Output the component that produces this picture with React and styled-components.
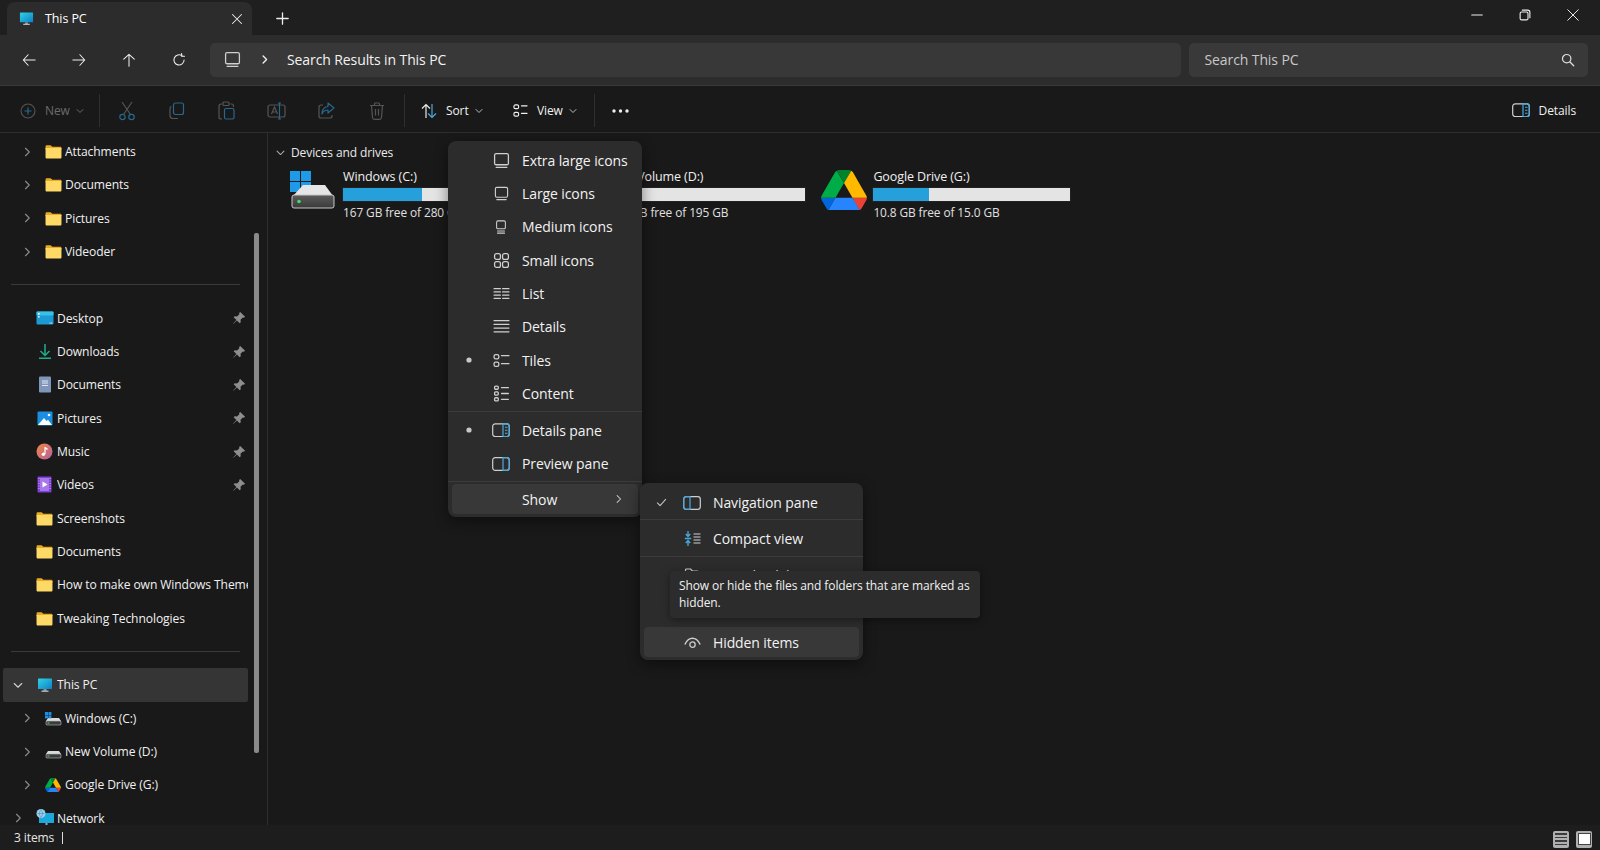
import React from "react";
import styled, { createGlobalStyle } from "styled-components";

const Global = createGlobalStyle`
  html, body { margin: 0; padding: 0; background: #191919; }
  body { font-family: "Open Sans", "Noto Sans", "Liberation Sans", sans-serif; color: #f0f0f0; }
  * { box-sizing: border-box; }
`;

const Page = styled.div`
  position: relative; width: 1600px; height: 850px; overflow: hidden;
  display: flex; flex-direction: column; background: #191919; font-size: 13px; letter-spacing: -0.1px;
`;
const TitleBar = styled.div`
  height: 35px; flex: none; background: #1f1f1f; display: flex; align-items: flex-end; padding-left: 7px;
`;
const Tab = styled.div`
  width: 245px; height: 33px; background: #2c2c2c; border-radius: 8px 8px 0 0; display: flex; align-items: center;
  padding: 0 9px 0 12px; gap: 11px; font-size: 12.5px; color: #fff;
`;
const TabTitle = styled.span` flex: 1; `;
const PlusBtn = styled.div` margin-left: 24px; width: 16px; height: 33px; display: flex; align-items: center; color: #eee; `;
const WinControls = styled.div` margin-left: auto; height: 35px; display: flex; padding-right: 3px; align-self: flex-start; `;
const WinBtn = styled.div` width: 48px; height: 30px; display: flex; align-items: center; justify-content: center; color: #eee; `;

const NavBar = styled.div`
  height: 51px; flex: none; background: #2c2c2c; border-bottom: 1px solid #3a3a3a; display: flex; align-items: center;
  padding: 0 12px 1px 3.5px;
`;
const NavBtn = styled.div` width: 50px; height: 34px; display: flex; align-items: center; justify-content: center; color: #eee; `;
const Address = styled.div`
  margin-left: 6.5px; width: 971px; height: 34px; border-radius: 5px; background: #383838; display: flex; align-items: center;
  padding-left: 14px; font-size: 14px; color: #f3f3f3;
`;
const Crumb = styled.div` width: 46px; display: flex; justify-content: center; `;
const SearchBox = styled.div`
  margin-left: 8px; width: 399px; height: 34px; border-radius: 5px; background: #393939; display: flex; align-items: center;
  justify-content: space-between; padding: 0 13px 0 15.5px; font-size: 14px; color: #c8c8c8;
`;

const Toolbar = styled.div`
  height: 47px; flex: none; background: #191919; border-bottom: 1px solid #2e2e2e; display: flex; align-items: center; padding-left: 14px; padding-top: 3px;
`;
const TBtn = styled.div`
  width: ${(p) => p.$w}px; height: 36px; display: flex; align-items: center; flex: none;
  justify-content: ${(p) => (p.$center ? "center" : "flex-start")};
  padding-left: ${(p) => p.$pl || 0}px; gap: 9.5px; color: ${(p) => (p.$dim ? "#6b6b6b" : "#f0f0f0")}; font-size: 12px;
`;
const TSep = styled.div` width: 1px; height: 33px; background: #2f2f2f; flex: none; margin: 0 ${(p) => p.$mr}px 0 ${(p) => p.$ml}px; `;
const TCaret = styled.span` display: flex; margin-left: -3px; `;
const DetailsBtn = styled.div` margin-left: auto; padding-right: 24px; display: flex; align-items: center; gap: 9px; font-size: 12px; color: #f0f0f0; `;

const Body = styled.div` flex: 1; min-height: 0; display: flex; `;
const Sidebar = styled.div`
  position: relative; width: 268px; flex: none; border-right: 1px solid #2e2e2e; padding: 2px 0 0 3px; overflow: hidden; font-size: 12.1px;
`;
const Scroll = styled.div` position: absolute; left: 254px; top: 100px; width: 5px; height: 520px; background: #8a8a8a; border-radius: 2px; `;
const Row = styled.div`
  width: 245px; height: 33.33px; display: flex; align-items: center; flex: none; border-radius: 2px;
  padding-left: ${(p) => (p.$level === 2 ? 15.5 : 7)}px; white-space: nowrap;
  background: ${(p) => (p.$active ? "#353535" : "transparent")};
`;
const Chev = styled.span` width: 16px; height: 16px; display: flex; align-items: center; justify-content: center; flex: none; margin-right: 9.5px; color: #8c8c8c; `;
const RowIcon = styled.span` width: 18px; height: 17px; display: flex; align-items: center; justify-content: center; flex: none; margin-right: ${(p) => (p.$level === 2 ? 3 : 3.5)}px; `;
const RowText = styled.span` flex: 1; overflow: hidden; min-width: 0; color: #f0f0f0; `;
const Pin = styled.span` width: 14px; display: flex; flex: none; margin-right: 2px; margin-left: 4px; `;
const SideSep = styled.div`
  width: 229px; height: 33.33px; margin-left: 8px; display: flex; align-items: center;
  &::after { content: ""; width: 100%; height: 1px; background: #3a3a3a; }
`;

const Main = styled.div` flex: 1; padding: 9px 0 0 7px; font-size: 12.5px; `;
const GroupHead = styled.div` display: flex; align-items: center; gap: 5px; height: 20px; color: #eaeaea; font-size: 12px; `;
const Tiles = styled.div` display: flex; padding-left: 15px; margin-top: 6px; `;
const Tile = styled.div` width: 265.2px; display: flex; flex: none; gap: 5px; `;
const TileIcon = styled.div` width: 47px; height: 44px; display: flex; align-items: center; flex: none; justify-content: center; `;
const TileInfo = styled.div` width: 199px; display: flex; flex-direction: column; color: #f0f0f0; `;
const TileName = styled.div` line-height: 18.5px; padding-left: 1px; `;
const TileSub = styled.div` color: #e0e0e0; line-height: 20px; font-size: 11.9px; padding-left: 1px; `;
const Bar = styled.div` height: 15.5px; background: #e4e4e4; border: 1px solid #222; `;
const BarFill = styled.div` height: 100%; background: #26a0da; `;

const Status = styled.div`
  height: 25px; flex: none; background: #1d1d1d; display: flex; align-items: center; padding: 0 8px 0 14px; font-size: 12px; color: #e6e6e6;
`;
const StatusRight = styled.div` margin-left: auto; display: flex; gap: 7px; margin-top: 3px; `;
const ViewBox = styled.div`
  width: 16px; height: 17px; background: #b0b0b0; border-radius: 2px; display: flex; flex-direction: column; justify-content: center;
  align-items: center; gap: 2px;
`;
const ViewLine = styled.span` width: 12px; height: 1.5px; background: #3c3c3c; `;
const ViewSquare = styled.span` width: 11px; height: 10px; background: #fff; box-shadow: 0 0 0 1px #444; `;
const Cursor = styled.span` display: inline-block; width: 1px; height: 12px; background: #ddd; margin-left: 8px; `;

const Menu = styled.div`
  position: absolute; left: ${(p) => p.$x}px; top: ${(p) => p.$y}px; width: ${(p) => p.$w}px; background: #2c2c2c;
  border-radius: 8px; box-shadow: 0 4px 14px rgba(0,0,0,.45); font-size: 14px; color: #f2f2f2;
  padding: ${(p) => p.$pt || 0}px 0 3px;
`;
const MenuRow = styled.div`
  height: ${(p) => p.$h || 33.33}px; display: flex; align-items: center; position: relative; border-radius: 4px;
  margin: 0 ${(p) => (p.$hover ? 4 : 0)}px; background: ${(p) => (p.$hover ? "#383838" : "transparent")};
  padding-left: ${(p) => 11 - (p.$hover ? 4 : 0)}px;
`;
const MenuMark = styled.span` width: 20px; display: flex; justify-content: center; flex: none; `;
const MenuIcon = styled.span` width: 24px; display: flex; justify-content: center; flex: none; margin-left: ${(p) => p.$ml}px; margin-right: 9px; `;
const MenuSep = styled.div` height: 1px; background: #3c3c3c; margin: ${(p) => p.$m || 0}; `;
const MenuArrow = styled.span` position: absolute; right: 14px; display: flex; top: 50%; transform: translateY(-50%); `;
const Tooltip = styled.div`
  position: absolute; left: 670px; top: 571px; width: 310px; height: 47px; background: #2c2c2c; border-radius: 4px;
  box-shadow: 0 2px 8px rgba(0,0,0,.4); padding: 6px 9px; font-size: 12px; line-height: 17px; color: #f0f0f0;
`;

const S = { fill: "none", stroke: "currentColor", strokeWidth: 1.2, strokeLinecap: "round", strokeLinejoin: "round" };
const Ic = ({ s = 16, vb = 16, children, c }) => (
  <svg width={s} height={s} viewBox={`0 0 ${vb} ${vb}`} {...S} color={c}>{children}</svg>
);
const ChevR = ({ c = "#8c8c8c", s = 12, w = 1.5 }) => <Ic s={s} c={c}><path d="M6 3l5 5-5 5" strokeWidth={w} /></Ic>;
const ChevD = ({ c = "#8c8c8c", s = 12 }) => <Ic s={s} c={c}><path d="M3 6l5 5 5-5" strokeWidth="1.5" /></Ic>;
const Caret = ({ c = "#bbb" }) => <TCaret><Ic s={8} c={c}><path d="M2 5l6 6 6-6" strokeWidth="2" /></Ic></TCaret>;

const Monitor = ({ s = 16, id = "mon" }) => (
  <svg width={s} height={s} viewBox="0 0 16 16">
    <defs><linearGradient id={id} x1="0" y1="0" x2="1" y2="1"><stop offset="0" stopColor="#2fd3e8" /><stop offset="1" stopColor="#0f7fc4" /></linearGradient></defs>
    <rect x="6.5" y="12" width="3" height="2" fill="#8a8f94" /><rect x="4.5" y="13.6" width="7" height="1.2" fill="#c4c8cc" />
    <rect x="1" y="1.5" width="14" height="10.5" rx=".6" fill={`url(#${id})`} />
  </svg>
);
const Folder = () => (
  <svg width="17" height="15" viewBox="0 0 16 14">
    <path d="M.5 2.2C.5 1.5 1 1 1.7 1h3.600l1.600 1.600h7.400c.7 0 1.200.5 1.200 1.200v1H.5z" fill="#e9a924" />
    <path d="M.5 3.800h15v8.500c0 .7-.5 1.200-1.200 1.200H1.700c-.7 0-1.200-.5-1.200-1.200z" fill="#ffd966" />
  </svg>
);
const DesktopI = () => (
  <svg width="18" height="14" viewBox="0 0 18 14"><rect x=".5" y=".5" width="17" height="13" rx="1" fill="#1c9ad6" /><rect x=".5" y=".5" width="17" height="4" rx="1" fill="#39c0e6" /><rect x="2" y="2" width="1.6" height="1.6" fill="#fff" /><rect x="2" y="5" width="1.6" height="1.6" fill="#d8f0fa" /><rect x="13.5" y="11.6" width="1" height="1" fill="#fff" /><rect x="15.2" y="11.6" width="1" height="1" fill="#fff" /></svg>
);
const DownloadI = () => (
  <svg width="14" height="17" viewBox="0 0 14 17"><path d="M7 1v11M2.500 8L7 12.500 11.500 8" fill="none" stroke="#1fae8d" strokeWidth="1.5" /><rect x="1" y="14.500" width="12" height="1.500" fill="#1fae8d" /></svg>
);
const DocI = () => (
  <svg width="14" height="17" viewBox="0 0 14 17"><rect x="1" y=".5" width="12" height="16" rx="1" fill="#7f96b8" /><path d="M4 5h6M4 7h6M4 9.500h6" stroke="#dfe6f0" strokeWidth="1" /></svg>
);
const PicI = () => (
  <svg width="16" height="15" viewBox="0 0 16 15"><rect x=".5" y=".5" width="15" height="14" rx="1" fill="#1a8fe0" /><path d="M1 14l6-7 2.500 3 1.500-1.200L15 14z" fill="#fff" /><circle cx="12" cy="4" r="1.300" fill="#fff" /></svg>
);
const MusicI = () => (
  <svg width="17" height="17" viewBox="0 0 17 17"><defs><linearGradient id="mu" x1="0" y1="0" x2="1" y2="1"><stop offset="0" stopColor="#f0893f" /><stop offset="1" stopColor="#b55ea0" /></linearGradient></defs><circle cx="8.500" cy="8.500" r="8" fill="url(#mu)" /><path d="M9 4v7" stroke="#fff" strokeWidth="1.200" /><circle cx="7.400" cy="11.300" r="1.700" fill="#fff" /><path d="M9 4l2.500 1.300V7L9 6z" fill="#fff" /></svg>
);
const VideoI = () => (
  <svg width="15" height="17" viewBox="0 0 15 17"><rect x=".5" y=".5" width="14" height="16" rx="1" fill="#7f3fd6" /><rect x="3" y="2" width="9" height="13" fill="#a678ea" /><path d="M5.500 5.500l5 3-5 3z" fill="#fff" /><path d="M1.500 2.500h.8M1.500 5h.8M1.500 7.500h.8M1.500 10h.8M1.500 12.500h.8M12.700 2.500h.8M12.700 5h.8M12.700 7.500h.8M12.700 10h.8M12.700 12.500h.8" stroke="#e6d8fb" strokeWidth="1" /></svg>
);
const DriveSm = ({ win }) => (
  <svg width="17" height="17" viewBox="0 0 17 17">
    <path d="M3 8h11l2 3v3a1 1 0 01-1 1H2a1 1 0 01-1-1v-3z" fill="#d9d9d9" /><rect x="1" y="11" width="15" height="4" rx="1" fill="#3b3b3b" stroke="#bbb" strokeWidth=".6" /><rect x="2.500" y="12.500" width="2" height="1" fill="#5ad35a" />
    {win && <g fill="#1d8fe0"><rect x="0" y="2" width="3" height="3" /><rect x="3.400" y="2" width="3" height="3" /><rect x="0" y="5.400" width="3" height="3" /><rect x="3.400" y="5.400" width="3" height="3" /></g>}
  </svg>
);
const GDrive = ({ s = 16 }) => (
  <svg width={s} height={s * 0.89} viewBox="0 0 87.300 78">
    <path d="M6.600 66.850l3.850 6.650c.8 1.400 1.950 2.500 3.300 3.300L27.500 53H0c0 1.550.4 3.100 1.200 4.500z" fill="#0066da" />
    <path d="M43.650 25L29.900 1.200c-1.350.8-2.500 1.900-3.300 3.300L1.200 48.500A9 9 0 000 53h27.500z" fill="#00ac47" />
    <path d="M73.550 76.800c1.350-.8 2.500-1.900 3.300-3.300l1.600-2.750L86.100 57.500c.8-1.400 1.200-2.950 1.200-4.500H59.800l5.850 11.500z" fill="#ea4335" />
    <path d="M43.650 25L57.400 1.200C56.050.4 54.500 0 52.900 0H34.400c-1.600 0-3.150.45-4.500 1.200z" fill="#00832d" />
    <path d="M59.800 53H27.500L13.750 76.800c1.350.8 2.900 1.200 4.500 1.200h50.800c1.600 0 3.150-.45 4.500-1.200z" fill="#2684fc" />
    <path d="M73.400 26.500L60.700 4.500c-.8-1.400-1.950-2.500-3.300-3.300L43.650 25 59.800 53h27.450c0-1.550-.4-3.100-1.200-4.500z" fill="#ffba00" />
  </svg>
);
const NetworkI = () => (
  <svg width="18" height="18" viewBox="0 0 18 18"><rect x="3" y="4" width="15" height="10" fill="#1ba8dc" /><rect x="9.500" y="14" width="2" height="2.500" fill="#9aa" /><rect x="7" y="16" width="7" height="1.200" fill="#cde" /><circle cx="5" cy="4.500" r="4.500" fill="#9fd0ea" /><path d="M1.500 4.500h7M5 .5c-2 2.500-2 5.500 0 8M5 .5c2 2.500 2 5.500 0 8" stroke="#3a86b8" strokeWidth=".6" fill="none" /></svg>
);
const PinI = () => (
  <svg width="14" height="14" viewBox="0 0 12 12"><path d="M7 .8l4.200 4.200-1 .8-.9-.2-2 2 .2 2-.9.9-2.400-2.400L1.200 11 1 10.800l2.800-3-2.400-2.400.9-.9 2 .2 2-2L6.100 1.800z" fill="#8e8e8e" /></svg>
);
const BigDrive = ({ win }) => (
  <svg width="47" height="38" viewBox="0 0 47 38">
    <defs><linearGradient id="dface" x1="0" y1="0" x2="0" y2="1"><stop offset="0" stopColor="#5c5c5c" /><stop offset="1" stopColor="#3a3a3a" /></linearGradient></defs>
    {win && <g fill="#1f9ae6"><rect x="0" y="0" width="10" height="10" /><rect x="11" y="0" width="10" height="10" /><rect x="0" y="11" width="10" height="10" /><rect x="11" y="11" width="10" height="10" /></g>}
    <path d="M13 14h22l8 11v2H3v-2z" fill="#e6e6e6" />
    <rect x="2" y="24" width="42" height="13" rx="2" fill="url(#dface)" stroke="#c8c8c8" strokeWidth="1" />
    <circle cx="9" cy="30.500" r="1.800" fill="#3fe05a" />
  </svg>
);

const ListLines = ({ ys, x1 = 1, x2 = 15 }) => <>{ys.map((y) => <path key={y} d={`M${x1} ${y}H${x2}`} />)}</>;
const MonitorOut = ({ s = 16 }) => <Ic s={s} c="#cfcfcf"><rect x="1.500" y="1.500" width="13" height="10.500" rx="1.500" /><path d="M3 14.500h10" /></Ic>;

const menuIcons = {
  xl: <MonitorOut s={17} />,
  lg: <MonitorOut s={15} />,
  md: <Ic s={14} c="#cfcfcf"><rect x="3" y="1" width="10" height="9" rx="1.500" /><path d="M4 12.500h8M4 15h8" /></Ic>,
  sm: <Ic s={17} c="#cfcfcf"><rect x="1.500" y="1.500" width="5.500" height="5.500" rx="1.800" /><rect x="9" y="1.500" width="5.500" height="5.500" rx="1.800" /><rect x="1.500" y="9" width="5.500" height="5.500" rx="1.800" /><rect x="9" y="9" width="5.500" height="5.500" rx="1.800" /></Ic>,
  list: <Ic s={17} c="#cfcfcf"><path d="M1 3.500h6M1 6.500h6M1 9.500h6M1 12.500h6M9 3.500h6M9 6.500h6M9 9.500h6M9 12.500h6" /></Ic>,
  det: <Ic s={17} c="#cfcfcf"><ListLines ys={[2.500, 6, 9.500, 13]} /></Ic>,
  tiles: <Ic s={17} c="#cfcfcf"><rect x="1" y="2.500" width="4.500" height="4" rx="1.500" /><rect x="1" y="9.500" width="4.500" height="4" rx="1.500" /><path d="M8 3.500h7M8 11h7" /></Ic>,
  cont: <Ic s={17} c="#cfcfcf"><rect x="1.500" y="1" width="3.500" height="3" rx="1" /><rect x="1.500" y="6.500" width="3.500" height="3" rx="1" /><rect x="1.500" y="12" width="3.500" height="3" rx="1" /><path d="M8 2.500h6.500M8 8h6.500M8 13.500h6.500" /></Ic>,
};
const DetailsPane = ({ s = 18 }) => (
  <svg width={s} height={s * 0.8} viewBox="0 0 18 14" fill="none"><rect x=".7" y=".7" width="16.600" height="12.600" rx="2.500" stroke="#cfcfcf" strokeWidth="1.200" /><path d="M11 .7h4a2.300 2.300 0 012.300 2.300v8a2.300 2.300 0 01-2.300 2.300h-4z" stroke="#4aa8de" strokeWidth="1.200" /><path d="M13 4h2.500M13 7h2.500M13 10h2.500" stroke="#4aa8de" strokeWidth="1.100" /></svg>
);
const PreviewPane = () => (
  <svg width="18" height="14" viewBox="0 0 18 14" fill="none"><rect x=".7" y=".7" width="16.600" height="12.600" rx="2.500" stroke="#cfcfcf" strokeWidth="1.200" /><path d="M11 .7h4a2.300 2.300 0 012.300 2.300v8a2.300 2.300 0 01-2.300 2.300h-4z" stroke="#4aa8de" strokeWidth="1.200" /></svg>
);
const NavPane = () => (
  <svg width="18" height="14" viewBox="0 0 18 14" fill="none"><rect x=".7" y=".7" width="16.600" height="12.600" rx="2.500" stroke="#cfcfcf" strokeWidth="1.200" /><path d="M7 .7H3A2.300 2.300 0 00.7 3v8A2.300 2.300 0 003 13.300h4z" stroke="#4aa8de" strokeWidth="1.200" /></svg>
);
const CompactI = () => (
  <svg width="17" height="17" viewBox="0 0 17 17" fill="none"><path d="M4 1v5M1.800 4L4 6.500 6.200 4M4 16v-5M1.800 13L4 10.500 6.200 13M.8 8.500h6.400" stroke="#4aa8de" strokeWidth="1.300" /><path d="M9.500 4h7M9.500 7h7M9.500 10h7M9.500 13h7" stroke="#cfcfcf" strokeWidth="1.200" /></svg>
);
const Blue = "#27688f";
const Grey = "#555";

const side = [
  { l: 2, ic: <Folder />, t: "Attachments", ch: "r" },
  { l: 2, ic: <Folder />, t: "Documents", ch: "r" },
  { l: 2, ic: <Folder />, t: "Pictures", ch: "r" },
  { l: 2, ic: <Folder />, t: "Videoder", ch: "r" },
  { sep: 1 },
  { l: 1, ic: <DesktopI />, t: "Desktop", pin: 1 },
  { l: 1, ic: <DownloadI />, t: "Downloads", pin: 1 },
  { l: 1, ic: <DocI />, t: "Documents", pin: 1 },
  { l: 1, ic: <PicI />, t: "Pictures", pin: 1 },
  { l: 1, ic: <MusicI />, t: "Music", pin: 1 },
  { l: 1, ic: <VideoI />, t: "Videos", pin: 1 },
  { l: 1, ic: <Folder />, t: "Screenshots" },
  { l: 1, ic: <Folder />, t: "Documents" },
  { l: 1, ic: <Folder />, t: "How to make own Windows Themes" },
  { l: 1, ic: <Folder />, t: "Tweaking Technologies" },
  { sep: 1 },
  { l: 1, ic: <Monitor id="monSide" />, t: "This PC", ch: "d", active: 1 },
  { l: 2, ic: <DriveSm win />, t: "Windows (C:)", ch: "r" },
  { l: 2, ic: <DriveSm />, t: "New Volume (D:)", ch: "r" },
  { l: 2, ic: <GDrive />, t: "Google Drive (G:)", ch: "r" },
  { l: 1, ic: <NetworkI />, t: "Network", ch: "r" },
];

const viewRows = [
  ["xl", "Extra large icons"], ["lg", "Large icons"], ["md", "Medium icons"], ["sm", "Small icons"],
  ["list", "List"], ["det", "Details"], ["tiles", "Tiles", 1], ["cont", "Content"],
];

const drives = [
  { name: "Windows (C:)", sub: "167 GB free of 280 GB", used: 40, icon: <BigDrive win /> },
  { name: "New Volume (D:)", sub: "183 GB free of 195 GB", used: 6, icon: <BigDrive /> },
  { name: "Google Drive (G:)", sub: "10.8 GB free of 15.0 GB", used: 28, icon: <GDrive s={46} /> },
];

const Dot = () => <svg width="8" height="8" viewBox="0 0 8 8"><circle cx="4" cy="4" r="2.600" fill="#c8c8c8" /></svg>;

function SideRow({ r }) {
  return (
    <Row $level={r.l} $active={r.active}>
      <Chev>{r.ch === "r" ? <ChevR /> : r.ch === "d" ? <ChevD c="#cfcfcf" /> : null}</Chev>
      <RowIcon $level={r.l}>{r.ic}</RowIcon>
      <RowText>{r.t}</RowText>
      {r.pin && <Pin><PinI /></Pin>}
    </Row>
  );
}

export default function App() {
  return (
    <Page>
      <Global />
      <TitleBar>
        <Tab>
          <Monitor s={15} />
          <TabTitle>This PC</TabTitle>
          <Ic s={12} c="#eee"><path d="M2 2l12 12M14 2L2 14" strokeWidth="1.400" /></Ic>
        </Tab>
        <PlusBtn><Ic s={13}><path d="M8 1v14M1 8h14" strokeWidth="1.600" /></Ic></PlusBtn>
        <WinControls>
          <WinBtn><Ic s={12}><path d="M1 8h14" strokeWidth="1.500" /></Ic></WinBtn>
          <WinBtn><Ic s={12}><rect x="1.500" y="4" width="10.500" height="10.500" rx="2" strokeWidth="1.500" /><path d="M4.500 1.500h7a3 3 0 013 3v7" strokeWidth="1.500" /></Ic></WinBtn>
          <WinBtn><Ic s={12}><path d="M1 1l14 14M15 1L1 15" strokeWidth="1.300" /></Ic></WinBtn>
        </WinControls>
      </TitleBar>

      <NavBar>
        <NavBtn><Ic s={14}><path d="M15 8H1.500M7 2L1.500 8 7 14" /></Ic></NavBtn>
        <NavBtn><Ic s={14}><path d="M1 8h13.500M9 2l5.500 6L9 14" /></Ic></NavBtn>
        <NavBtn><Ic s={14}><path d="M8 15V1.500M2 7l6-5.500L14 7" /></Ic></NavBtn>
        <NavBtn><Ic s={14}><path d="M13.800 8A5.800 5.800 0 1111.500 3.300" /><path d="M11 .5v3.300h3.300" /></Ic></NavBtn>
        <Address>
          <MonitorOut s={17} />
          <Crumb><ChevR c="#f0f0f0" s={11} w={2} /></Crumb>
          Search Results in This PC
        </Address>
        <SearchBox>
          Search This PC
          <Ic s={14} c="#ddd"><circle cx="6.500" cy="6.500" r="4.800" strokeWidth="1.400" /><path d="M10 10l4.500 4.500" strokeWidth="1.500" /></Ic>
        </SearchBox>
      </NavBar>

      <Toolbar>
        <TBtn $w={85} $dim $pl={5.5}>
          <svg width="16" height="16" viewBox="0 0 16 16" fill="none"><circle cx="8" cy="8" r="7" stroke={Grey} strokeWidth="1.100" /><path d="M8 4.500v7M4.500 8h7" stroke={Blue} strokeWidth="1.200" /></svg>
          New<Caret c="#6b6b6b" />
        </TBtn>
        <TSep $ml={0} $mr={1.5} />
        <TBtn $w={50} $center><svg width="18" height="20" viewBox="0 0 18 20" fill="none"><path d="M4 1l8.500 12.500M14 1L5.500 13.500" stroke={Grey} strokeWidth="1.200" /><circle cx="4.500" cy="16" r="2.700" stroke={Blue} strokeWidth="1.200" /><circle cx="13.500" cy="16" r="2.700" stroke={Blue} strokeWidth="1.200" /></svg></TBtn>
        <TBtn $w={50} $center><svg width="17" height="17" viewBox="0 0 17 17" fill="none"><rect x="5.500" y="1" width="10" height="11.500" rx="2" stroke={Blue} strokeWidth="1.200" /><path d="M3.500 4.500A2 2 0 002 6.500v7a3 3 0 003 3h5" stroke={Grey} strokeWidth="1.200" /></svg></TBtn>
        <TBtn $w={50} $center><svg width="17" height="19" viewBox="0 0 17 19" fill="none"><path d="M4 3H3a2 2 0 00-2 2v11a2 2 0 002 2h1M12.500 3h1A2 2 0 0115.500 5v1" stroke={Grey} strokeWidth="1.200" /><rect x="5" y="1" width="6" height="3.500" rx="1" stroke={Grey} strokeWidth="1.200" /><rect x="6.500" y="7.500" width="9.500" height="10.500" rx="1.500" stroke={Blue} strokeWidth="1.200" /></svg></TBtn>
        <TBtn $w={50} $center><svg width="19" height="18" viewBox="0 0 19 18" fill="none"><rect x="1" y="3" width="17" height="12" rx="2" stroke={Grey} strokeWidth="1.200" /><path d="M4.500 12l3-7 3 7M5.500 10h4" stroke={Grey} strokeWidth="1.200" /><path d="M12.500 1v16M11 1h3M11 17h3" stroke={Blue} strokeWidth="1.200" /></svg></TBtn>
        <TBtn $w={50} $center><svg width="17" height="17" viewBox="0 0 17 17" fill="none"><path d="M5 3H3a2 2 0 00-2 2v9a2 2 0 002 2h9a2 2 0 002-2v-1" stroke={Grey} strokeWidth="1.200" /><path d="M10 1l6 5-6 5V8C7 8 5 9.500 4 12c0-4 2-7 6-7.500z" stroke={Blue} strokeWidth="1.200" strokeLinejoin="round" /></svg></TBtn>
        <TBtn $w={50} $center><svg width="16" height="18" viewBox="0 0 16 18" fill="none" stroke={Grey} strokeWidth="1.200"><path d="M1 3.500h14M5.500 3.500V2a1 1 0 011-1h3a1 1 0 011 1v1.500M2.500 3.500l1 12a2 2 0 002 1.800h5a2 2 0 002-1.800l1-12M6.500 7v6.500M9.500 7v6.500" /></svg></TBtn>
        <TSep $ml={2.5} $mr={0} />
        <TBtn $w={98} $pl={15.5}>
          <svg width="16" height="16" viewBox="0 0 16 16" fill="none" strokeWidth="1.200"><path d="M5 15V1.500M1 5.500l4-4 4 4" stroke="#e8e8e8" /><path d="M11 1v13.500M7 10.500l4 4 4-4" stroke="#4aa8de" /></svg>
          Sort<Caret />
        </TBtn>
        <TBtn $w={91} $pl={9.5}>
          <Ic s={15}><rect x="1" y="2" width="5" height="4" rx="1.500" /><rect x="1" y="10" width="5" height="4" rx="1.500" /><path d="M9 3h6M9 11h6" /></Ic>
          View<Caret />
        </TBtn>
        <TSep $ml={0} $mr={0} />
        <TBtn $w={50} $center>
          <svg width="17" height="4" viewBox="0 0 17 4"><circle cx="2" cy="2" r="1.700" fill="#eee" /><circle cx="8.500" cy="2" r="1.700" fill="#eee" /><circle cx="15" cy="2" r="1.700" fill="#eee" /></svg>
        </TBtn>
        <DetailsBtn><DetailsPane />Details</DetailsBtn>
      </Toolbar>

      <Body>
        <Sidebar>
          {side.map((r, i) => r.sep ? <SideSep key={i} /> : <SideRow key={i} r={r} />)}
          <Scroll />
        </Sidebar>
        <Main>
          <GroupHead><ChevD c="#aaa" s={11} />Devices and drives</GroupHead>
          <Tiles>
            {drives.map((d) => (
              <Tile key={d.name}>
                <TileIcon>{d.icon}</TileIcon>
                <TileInfo>
                  <TileName>{d.name}</TileName>
                  <Bar><BarFill style={{ width: `${d.used}%` }} /></Bar>
                  <TileSub>{d.sub}</TileSub>
                </TileInfo>
              </Tile>
            ))}
          </Tiles>
        </Main>
      </Body>

      <Status>
        3 items<Cursor />
        <StatusRight>
          <ViewBox><ViewLine /><ViewLine /><ViewLine /><ViewLine /></ViewBox>
          <ViewBox><ViewSquare /></ViewBox>
        </StatusRight>
      </Status>

      <Menu $x={448} $y={141} $w={194} $pt={2.5}>
        {viewRows.map(([k, t, dot]) => (
          <MenuRow key={k}>
            <MenuMark>{dot && <Dot />}</MenuMark>
            <MenuIcon $ml={10}>{menuIcons[k]}</MenuIcon>{t}
          </MenuRow>
        ))}
        <MenuSep $m="1px 0 1.5px" />
        <MenuRow><MenuMark><Dot /></MenuMark><MenuIcon $ml={10}><DetailsPane /></MenuIcon>Details pane</MenuRow>
        <MenuRow><MenuMark /><MenuIcon $ml={10}><PreviewPane /></MenuIcon>Preview pane</MenuRow>
        <MenuSep $m="1px 0 2px" />
        <MenuRow $h={30} $hover><MenuMark /><MenuIcon $ml={10} />Show<MenuArrow><ChevR c="#c8c8c8" s={11} /></MenuArrow></MenuRow>
      </Menu>

      <Menu $x={640} $y={483} $w={223} $pt={3}>
        <MenuRow $h={33}>
          <MenuMark><Ic s={11} c="#c8c8c8"><path d="M2 8.500l4 4 8-9" strokeWidth="1.500" /></Ic></MenuMark>
          <MenuIcon $ml={9}><NavPane /></MenuIcon>Navigation pane
        </MenuRow>
        <MenuSep />
        <MenuRow $h={36}><MenuMark /><MenuIcon $ml={9}><CompactI /></MenuIcon>Compact view</MenuRow>
        <MenuSep />
        <MenuRow $h={37}><MenuMark /><MenuIcon $ml={9}><Ic s={16} c="#cfcfcf"><path d="M1.500 13V2a1 1 0 011-1h4l2 2h5a1 1 0 011 1v9a1 1 0 01-1 1h-11a1 1 0 01-1-1z" /></Ic></MenuIcon>Item check boxes</MenuRow>
        <MenuRow $h={33}><MenuMark /><MenuIcon $ml={9} />File name extensions</MenuRow>
        <MenuRow $h={30} $hover>
          <MenuMark /><MenuIcon $ml={9}><Ic s={17} c="#cfcfcf"><path d="M1 9.500C3 5.500 5.500 4 8 4s5 1.500 7 5.500" /><circle cx="8" cy="10" r="2.500" /></Ic></MenuIcon>Hidden items
        </MenuRow>
      </Menu>

      <Tooltip>Show or hide the files and folders that are marked as hidden.</Tooltip>
    </Page>
  );
}
